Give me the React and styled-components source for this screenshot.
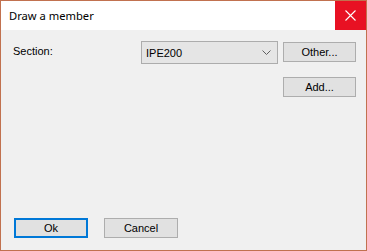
import React from "react";
import styled, { createGlobalStyle } from "styled-components";

const GlobalStyle = createGlobalStyle`
    html, body {
        margin: 0;
        padding: 0;
        background: #f0f0f0;
    }
`;

const Window = styled.div`
    width: 367px;
    height: 251px;
    box-sizing: border-box;
    display: flex;
    flex-direction: column;
    border: 1px solid #c1714f;
    background-color: #f0f0f0;
    font-family: "Liberation Sans", Arial, sans-serif;
    font-size: 11px;
    color: #000;
`;

const TitleBar = styled.div`
    height: 29px;
    display: flex;
    flex-direction: row;
    align-items: center;
    background-color: #fff;
`;

const Title = styled.div`
    flex-grow: 1;
    padding-left: 8px;
    font-family: "Noto Sans", "Open Sans", sans-serif;
    font-size: 11.2px;
    color: #000;
`;

const CloseButton = styled.div`
    width: 31px;
    height: 29px;
    display: flex;
    align-items: center;
    justify-content: center;
    background-color: #e81123;
`;

const Body = styled.div`
    flex: 1;
    display: flex;
    flex-direction: column;
    padding: 11px 10px 12px 12px;
`;

const Row = styled.div`
    display: flex;
    flex-direction: row;
    align-items: flex-start;
    gap: 5px;
    margin-top: ${(p) => p.top || 0}px;
`;

const Label = styled.div`
    flex: 1;
    margin-top: 4px;
    line-height: 13px;
`;

const Combo = styled.div`
    width: 137px;
    height: 23px;
    box-sizing: border-box;
    display: flex;
    align-items: center;
    justify-content: space-between;
    padding: 0 6px 0 4px;
    background-color: #e5e5e5;
    border: 1px solid #acacac;
`;

const Button = styled.div`
    width: ${(p) => p.w || 73}px;
    height: 20px;
    box-sizing: border-box;
    display: flex;
    align-items: center;
    justify-content: center;
    margin-top: ${(p) => p.mt || 0}px;
    background-color: #e1e1e1;
    border: ${(p) => (p.primary ? "2px solid #0078d7" : "1px solid #adadad")};
`;

const Spacer = styled.div`
    flex: 1;
`;

const Footer = styled.div`
    display: flex;
    flex-direction: row;
    gap: 16px;
    padding-left: 1px;
`;

export default function App() {
    return (
        <>
            <GlobalStyle />
            <Window>
                <TitleBar>
                    <Title>Draw a member</Title>
                    <CloseButton>
                        <svg width="11" height="11" viewBox="0 0 11 11">
                            <path d="M0.5 0.5 L10.5 10.5 M10.5 0.5 L0.5 10.5" stroke="#fff" strokeWidth="1.1" />
                        </svg>
                    </CloseButton>
                </TitleBar>
                <Body>
                    <Row>
                        <Label>Section:</Label>
                        <Combo>
                            <span>IPE200</span>
                            <svg width="9" height="5" viewBox="0 0 9 5">
                                <path d="M0.5 0.5 L4.5 4.5 L8.5 0.5" stroke="#606060" strokeWidth="1" fill="none" />
                            </svg>
                        </Combo>
                        <Button mt={1}>Other...</Button>
                    </Row>
                    <Row top={13}>
                        <Spacer />
                        <Button>Add...</Button>
                    </Row>
                    <Spacer />
                    <Footer>
                        <Button w={74} primary>Ok</Button>
                        <Button w={74}>Cancel</Button>
                    </Footer>
                </Body>
            </Window>
        </>
    );
}
